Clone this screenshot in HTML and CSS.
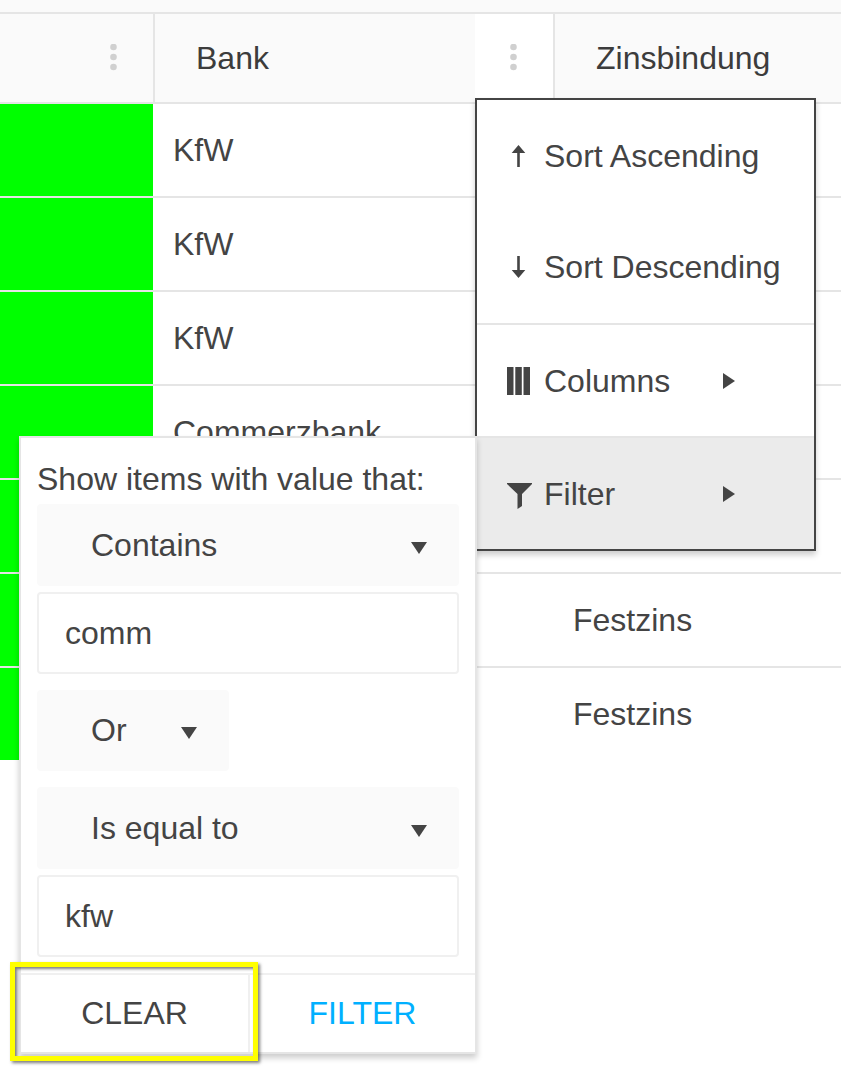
FILE: index.html
```html
<!DOCTYPE html>
<html lang="de">
<head>
<meta charset="utf-8">
<meta name="viewport" content="width=device-width, initial-scale=1">
<title>Bank</title>
<link rel="stylesheet" href="styles.css">
</head>
<body>
<main class="grid">
  <div class="group-bar"></div>
  <table class="table">
    <colgroup><col class="col-status"><col class="col-bank"><col></colgroup>
    <thead>
      <tr>
        <th><div class="head"><span class="title"></span>
          <button class="dots" type="button" aria-label="Column menu"><svg width="8" height="28" viewBox="0 0 8 28"><circle cx="3.5" cy="3" r="3.3"/><circle cx="3.5" cy="13" r="3.3"/><circle cx="3.5" cy="23" r="3.3"/></svg></button></div></th>
        <th><div class="head"><span class="title">Bank</span>
          <button class="dots open" type="button" aria-label="Bank column menu"><svg width="8" height="28" viewBox="0 0 8 28"><circle cx="3.5" cy="3" r="3.3"/><circle cx="3.5" cy="13" r="3.3"/><circle cx="3.5" cy="23" r="3.3"/></svg></button></div></th>
        <th><div class="head"><span class="title">Zinsbindung</span></div></th>
      </tr>
    </thead>
    <tbody>
      <tr><td class="status"></td><td>KfW</td><td></td></tr>
      <tr><td class="status"></td><td>KfW</td><td></td></tr>
      <tr><td class="status"></td><td>KfW</td><td></td></tr>
      <tr><td class="status"></td><td>Commerzbank</td><td></td></tr>
      <tr><td class="status"></td><td></td><td></td></tr>
      <tr><td class="status"></td><td></td><td>Festzins</td></tr>
      <tr><td class="status"></td><td></td><td>Festzins</td></tr>
    </tbody>
  </table>

  <div class="menu">
    <div class="sorting">
      <button class="item" type="button"><svg class="icon" width="28" height="32" viewBox="0 0 28 32"><path d="M14.5 5l6.8 8h-5.500v14h-2.600V13H7.700z"/></svg>Sort Ascending</button>
      <button class="item" type="button"><svg class="icon" width="28" height="32" viewBox="0 0 28 32"><path d="M13.200 5h2.600v14h5.500l-6.800 8-6.800-8h5.500z"/></svg>Sort Descending</button>
    </div>
    <button class="item sub" type="button"><svg class="icon" width="28" height="32" viewBox="0 0 28 32"><path d="M3 2h6.500v28H3zM11.300 2h6.500v28h-6.500zM19.500 2H26v28h-6.500z"/></svg>Columns<svg class="arrow" width="12" height="16" viewBox="0 0 12 16"><path d="M0 0l12 8-12 8z"/></svg></button>
    <button class="item sub active" type="button"><svg class="icon" width="28" height="32" viewBox="0 0 28 32"><path d="M3 5h25v1L18 16v12l-4.500 3V16L3 6z"/></svg>Filter<svg class="arrow" width="12" height="16" viewBox="0 0 12 16"><path d="M0 0l12 8-12 8z"/></svg></button>
  </div>

  <form class="filter">
    <div class="fields">
      <p class="hint">Show items with value that:</p>
      <div class="pick"><select aria-label="First operator"><option>Contains</option></select><svg class="caret" width="16" height="12" viewBox="0 0 16 12"><path d="M0 0h16L8 12z"/></svg></div>
      <input class="text" type="text" aria-label="First value" value="comm">
      <div class="pick logic"><select aria-label="Logic"><option>Or</option></select><svg class="caret" width="16" height="12" viewBox="0 0 16 12"><path d="M0 0h16L8 12z"/></svg></div>
      <div class="pick"><select aria-label="Second operator"><option>Is equal to</option></select><svg class="caret" width="16" height="12" viewBox="0 0 16 12"><path d="M0 0h16L8 12z"/></svg></div>
      <input class="text" type="text" aria-label="Second value" value="kfw">
    </div>
    <div class="actions">
      <button class="clear" type="button">CLEAR</button>
      <button class="apply" type="button">FILTER</button>
    </div>
  </form>
  <div class="marker"></div>
</main>
</body>
</html>
```

FILE: styles.css
```css
* { box-sizing: border-box; }
body {
  margin: 0;
  background: #fff;
  color: #444;
  font: 32px/36px "Liberation Sans", Arial, sans-serif;
}
button, input, select {
  margin: 0;
  padding: 0;
  border: 0;
  background: none;
  color: inherit;
  font: inherit;
}
svg { display: block; fill: currentColor; flex: none; }

.grid { position: relative; min-height: 100vh; }
.group-bar { height: 14px; background: #fafafa; border-bottom: 2px solid #e5e5e5; }

.table { width: 100%; table-layout: fixed; border-collapse: separate; border-spacing: 0; }
.col-status { width: 153px; }
.col-bank { width: 400px; }
.table th {
  padding: 0;
  background: #fafafa;
  border-bottom: 2px solid #e5e5e5;
  border-left: 2px solid #e5e5e5;
  font-weight: 400;
  text-align: left;
  color: #3c3c3c;
}
.table th:first-child { border-left: 0; }
.head { display: flex; align-items: center; height: 88px; }
.title { flex: 1; padding-left: 41px; }
.dots {
  display: flex;
  align-items: center;
  justify-content: center;
  width: 78px;
  height: 100%;
  color: #d0d0d0;
}
.open { background: #fff; }
.table td { height: 94px; padding: 0 20px; border-bottom: 2px solid #e5e5e5; }
.table tr:last-child td { height: 92px; border-bottom: 0; }
.status { background: #0f0; }

.menu {
  position: absolute;
  left: 475px;
  top: 98px;
  width: 341px;
  border: 2px solid #444;
  background: #fff;
  box-shadow: 0 4px 6px rgba(0, 0, 0, .2);
}
.item { display: flex; align-items: center; width: 100%; padding-left: 27px; }
.sorting { padding-bottom: 1px; }
.sorting .item { height: 111px; }
.icon { margin-right: 12px; }
.sub { height: 113px; border-top: 2px solid #e5e5e5; }
.sub .arrow { margin-left: auto; margin-right: 79px; }
.active { background: #ebebeb; }

.filter {
  position: absolute;
  left: 19px;
  top: 436px;
  width: 458px;
  border: 2px solid #e5e5e5;
  background: #fff;
  box-shadow: 0 4px 6px rgba(0, 0, 0, .2);
}
.fields { padding: 23px 16px 16px; }
.hint { margin: 0 0 7px; white-space: nowrap; }
.pick { position: relative; }
.pick select {
  display: block;
  width: 100%;
  height: 82px;
  padding-left: 54px;
  border-radius: 4px;
  background: #fafafa;
  appearance: none;
}
.caret { position: absolute; right: 32px; top: 38px; pointer-events: none; }
.text {
  display: block;
  width: 100%;
  height: 82px;
  margin-top: 6px;
  padding: 0 26px;
  border: 2px solid #f0f0f0;
  border-radius: 4px;
}
.logic { width: 192px; margin: 16px 0; }
.logic select { height: 81px; padding-bottom: 1px; }
.logic .caret { top: 37px; }
.actions { display: flex; border-top: 2px solid #f0f0f0; }
.actions button { flex: 1; height: 77px; padding-bottom: 2px; }
.actions .clear { flex: 0 0 229px; border-right: 2px solid #f0f0f0; }
.apply { color: #00b0ff; }

.marker {
  position: absolute;
  left: 10px;
  top: 962px;
  width: 248px;
  height: 99px;
  border: 5px solid #ff0;
  box-shadow: 2px 2px 3px rgba(0, 0, 0, .5), inset 2px 2px 3px rgba(0, 0, 0, .5);
  pointer-events: none;
}
```
